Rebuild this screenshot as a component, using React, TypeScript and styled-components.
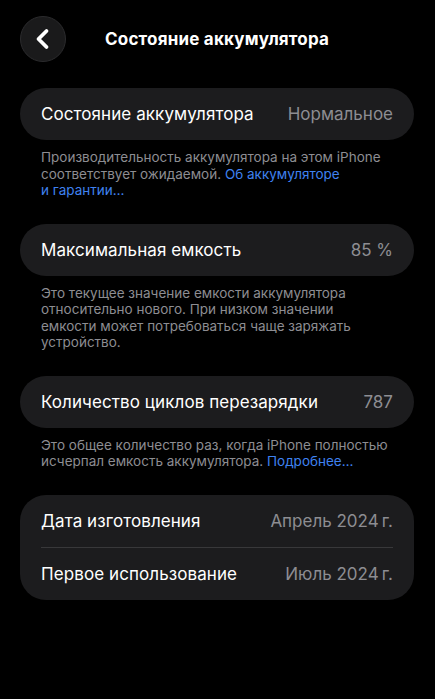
import React from "react";
import styled, { createGlobalStyle } from "styled-components";

const Global = createGlobalStyle`
  html, body { margin: 0; padding: 0; background: #000; }
  body {
    font-family: Inter, "Noto Sans", "Liberation Sans", sans-serif;
    -webkit-font-smoothing: antialiased;
  }
`;

const Page = styled.div`
  width: 435px;
  min-height: 699px;
  background: #000;
  box-sizing: border-box;
  padding: 16px 21px 0 20px;
  display: flex;
  flex-direction: column;
`;

const Header = styled.header`
  display: flex;
  align-items: center;
  height: 46px;
  margin-bottom: 26px;
`;

const BackButton = styled.button`
  width: 46px;
  height: 46px;
  border-radius: 50%;
  background: #1a1a1b;
  border: 1px solid #2b2b2d;
  box-sizing: border-box;
  display: flex;
  align-items: center;
  justify-content: center;
  padding: 0;
  cursor: pointer;
  flex-shrink: 0;
`;

const Title = styled.h1`
  margin: 0 0 0 39px;
  color: #fff;
  font-size: 17px;
  font-weight: 700;
  letter-spacing: 0.2px;
`;

const Card = styled.div`
  background: #1c1c1e;
  border-radius: 26px;
  padding: 0 21px;
  display: flex;
  flex-direction: column;
`;

const Row = styled.div<{ $divider?: boolean }>`
  height: 52px;
  display: flex;
  align-items: center;
  justify-content: space-between;
  border-bottom: ${(p) => (p.$divider ? "1px solid #38383a" : "none")};
`;

const Label = styled.span`
  color: #fff;
  font-size: 17px;
  font-weight: 400;
  letter-spacing: 0.08px;
`;

const Value = styled.span`
  color: #8d8d92;
  font-size: 17px;
  font-weight: 400;
  letter-spacing: 0;
`;

const Footer = styled.p`
  margin: 0 0 25px;
  padding: 9px 21px 0;
  color: #8d8d92;
  font-size: 13.5px;
  line-height: 16.5px;
  letter-spacing: 0;
`;

const Link = styled.a`
  color: #3f82f0;
  text-decoration: none;
`;

const Chevron = () => (
  <svg width="16" height="22" viewBox="0 0 16 22" fill="none">
    <path
      d="M11.5 3 L3.5 11 L11.5 19"
      stroke="#fff"
      strokeWidth="3.8"
      strokeLinecap="round"
      strokeLinejoin="round"
    />
  </svg>
);

export default function App() {
  return (
    <>
      <Global />
      <Page>
        <Header>
          <BackButton aria-label="Назад">
            <Chevron />
          </BackButton>
          <Title>Состояние аккумулятора</Title>
        </Header>

        <Card>
          <Row>
            <Label>Состояние аккумулятора</Label>
            <Value>Нормальное</Value>
          </Row>
        </Card>
        <Footer>
          Производительность аккумулятора на этом iPhone
          <br />
          соответствует ожидаемой. <Link>Об аккумуляторе</Link>
          <br />
          <Link>и гарантии…</Link>
        </Footer>

        <Card>
          <Row>
            <Label>Максимальная емкость</Label>
            <Value>85 %</Value>
          </Row>
        </Card>
        <Footer>
          Это текущее значение емкости аккумулятора
          <br />
          относительно нового. При низком значении
          <br />
          емкости может потребоваться чаще заряжать
          <br />
          устройство.
        </Footer>

        <Card>
          <Row>
            <Label>Количество циклов перезарядки</Label>
            <Value>787</Value>
          </Row>
        </Card>
        <Footer>
          Это общее количество раз, когда iPhone полностью
          <br />
          исчерпал емкость аккумулятора. <Link>Подробнее…</Link>
        </Footer>

        <Card>
          <Row $divider>
            <Label>Дата изготовления</Label>
            <Value>Апрель 2024{"\u202F"}г.</Value>
          </Row>
          <Row>
            <Label>Первое использование</Label>
            <Value>Июль 2024{"\u202F"}г.</Value>
          </Row>
        </Card>
      </Page>
    </>
  );
}
